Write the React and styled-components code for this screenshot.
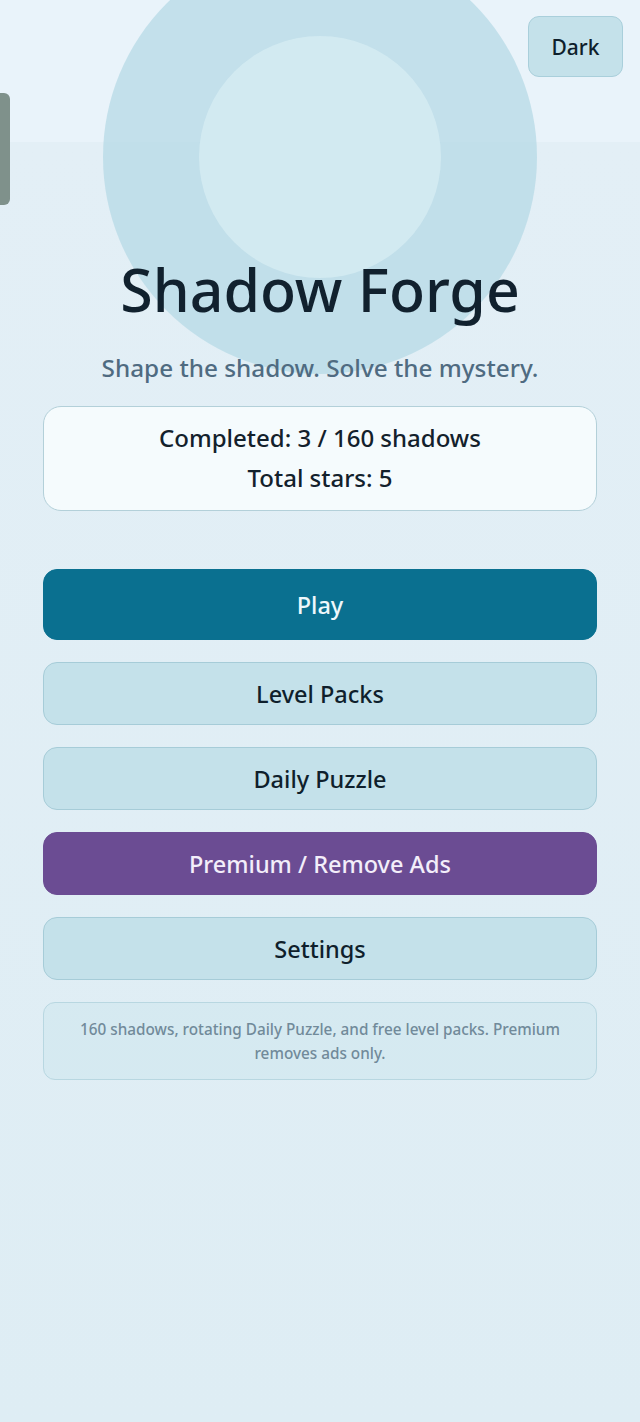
import React from "react";
import styled, { createGlobalStyle } from "styled-components";

const Global = createGlobalStyle`
  html, body { margin: 0; padding: 0; }
  body { font-family: "Noto Sans", "Open Sans", sans-serif; }
  * { box-sizing: border-box; }
`;

const Page = styled.div`
  position: relative;
  min-height: 1422px;
  overflow: hidden;
  background: linear-gradient(
    to bottom,
    #e9f3fa 0,
    #e9f3fa 142px,
    #e3eff6 142px,
    #deedf4 100%
  );
`;

const Halo = styled.div`
  position: absolute;
  left: 50%;
  top: ${(p) => p.$cy - p.$r}px;
  width: ${(p) => p.$r * 2}px;
  height: ${(p) => p.$r * 2}px;
  margin-left: ${(p) => -p.$r}px;
  border-radius: 50%;
  background: ${(p) => p.$color};
  pointer-events: none;
`;

const SideTab = styled.div`
  position: absolute;
  left: 0;
  top: 93px;
  width: 10px;
  height: 112px;
  background: #7f918b;
  border-radius: 0 6px 6px 0;
`;

const ThemeToggle = styled.button`
  position: absolute;
  top: 16px;
  right: 17px;
  width: 95px;
  height: 61px;
  border-radius: 11px;
  border: 1px solid #a9cfdb;
  background: #c4e1ea;
  color: #0f1f2c;
  font-family: inherit;
  font-size: 21px;
  font-weight: 500;
  cursor: pointer;
`;

const Main = styled.main`
  position: relative;
  display: flex;
  flex-direction: column;
  align-items: stretch;
  padding: 252px 43px 40px;
`;

const Title = styled.h1`
  margin: 0;
  text-align: center;
  font-size: 59px;
  line-height: 74px;
  font-weight: 500;
  color: #11212e;
`;

const Tagline = styled.p`
  margin: 27px 0 0;
  text-align: center;
  font-size: 24.3px;
  line-height: 30px;
  font-weight: 500;
  color: #4f6b81;
`;

const StatsCard = styled.section`
  margin-top: 23px;
  padding: 11px 16px 12px;
  background: #f5fbfd;
  border: 1px solid #b3d0d9;
  border-radius: 18px;
  text-align: center;
`;

const StatLine = styled.div`
  font-size: 24px;
  line-height: 40px;
  font-weight: 500;
  color: #13212c;
`;

const Menu = styled.nav`
  margin-top: 58px;
  display: flex;
  flex-direction: column;
  gap: 22px;
`;

const variants = {
  primary: { bg: "#0a7090", border: "#0a7090", color: "#eef8fc" },
  secondary: { bg: "#c4e1ea", border: "#a6ccd8", color: "#0f1f2c" },
  premium: { bg: "#6b4c93", border: "#6b4c93", color: "#f3eefa" },
};

const MenuButton = styled.button`
  width: 100%;
  height: ${(p) => (p.$variant === "primary" ? 71 : 63)}px;
  border-radius: 14px;
  border: 1px solid ${(p) => variants[p.$variant].border};
  background: ${(p) => variants[p.$variant].bg};
  color: ${(p) => variants[p.$variant].color};
  font-family: inherit;
  font-size: 23.5px;
  font-weight: 500;
  cursor: pointer;
`;

const Note = styled.p`
  margin: 22px 0 0;
  padding: 14px 30px;
  background: rgba(196, 225, 234, 0.35);
  border: 1px solid #b8d7e1;
  border-radius: 12px;
  text-align: center;
  font-size: 15.3px;
  line-height: 24px;
  font-weight: 500;
  color: #718a9a;
`;

export default function App() {
  return (
    <>
      <Global />
      <Page>
        <Halo $cy={157} $r={217} $color="rgba(182, 218, 230, 0.75)" />
        <Halo $cy={157} $r={121} $color="rgba(214, 236, 243, 0.8)" />
        <SideTab />
        <ThemeToggle>Dark</ThemeToggle>
        <Main>
          <Title>Shadow Forge</Title>
          <Tagline>Shape the shadow. Solve the mystery.</Tagline>
          <StatsCard>
            <StatLine>Completed: 3 / 160 shadows</StatLine>
            <StatLine>Total stars: 5</StatLine>
          </StatsCard>
          <Menu>
            <MenuButton $variant="primary">Play</MenuButton>
            <MenuButton $variant="secondary">Level Packs</MenuButton>
            <MenuButton $variant="secondary">Daily Puzzle</MenuButton>
            <MenuButton $variant="premium">Premium / Remove Ads</MenuButton>
            <MenuButton $variant="secondary">Settings</MenuButton>
          </Menu>
          <Note>
            160 shadows, rotating Daily Puzzle, and free level packs. Premium
            removes ads only.
          </Note>
        </Main>
      </Page>
    </>
  );
}
